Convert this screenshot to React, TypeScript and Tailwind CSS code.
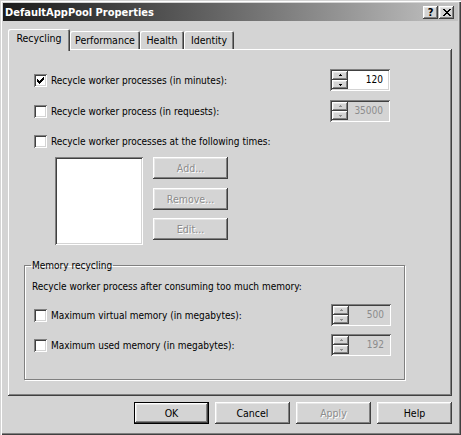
import React from "react";

const RAISED =
  "shadow-[inset_-1px_-1px_#404040,inset_1px_1px_#ffffff,inset_-2px_-2px_#808080,inset_2px_2px_#e6e6e6]";
const SUNKEN =
  "shadow-[inset_1px_1px_#808080,inset_-1px_-1px_#ffffff,inset_2px_2px_#404040,inset_-2px_-2px_#d4d4d4]";

function Check({ checked }: { checked?: boolean }) {
  return (
    <div className={`w-[13px] h-[13px] shrink-0 bg-white ${SUNKEN} flex items-center justify-center`}>
      {checked && (
        <svg width="7" height="7" viewBox="0 0 7 7" shapeRendering="crispEdges">
          <rect x="6" y="0" width="1" height="1" fill="#000" />
          <rect x="5" y="1" width="2" height="1" fill="#000" />
          <rect x="0" y="2" width="1" height="1" fill="#000" />
          <rect x="4" y="2" width="3" height="1" fill="#000" />
          <rect x="0" y="3" width="2" height="1" fill="#000" />
          <rect x="3" y="3" width="3" height="1" fill="#000" />
          <rect x="0" y="4" width="5" height="1" fill="#000" />
          <rect x="1" y="5" width="3" height="1" fill="#000" />
          <rect x="2" y="6" width="1" height="1" fill="#000" />
        </svg>
      )}
    </div>
  );
}

function Arrow({ up, disabled }: { up?: boolean; disabled?: boolean }) {
  const c = disabled ? "#8c8c8c" : "#000";
  return (
    <svg width="5" height="3" viewBox="0 0 5 3" shapeRendering="crispEdges">
      {up ? (
        <>
          <rect x="2" y="0" width="1" height="1" fill={c} />
          <rect x="1" y="1" width="3" height="1" fill={c} />
        </>
      ) : (
        <>
          <rect x="1" y="1" width="3" height="1" fill={c} />
          <rect x="2" y="2" width="1" height="1" fill={c} />
        </>
      )}
    </svg>
  );
}

function Spin({ value, disabled }: { value: string; disabled?: boolean }) {
  return (
    <div
      className={`w-[60px] h-[22px] p-[2px] flex shrink-0 ${SUNKEN} ${
        disabled ? "bg-[#d4d4d4]" : "bg-white"
      }`}
    >
      <div className="flex flex-col w-[16px] h-[18px] shrink-0">
        <div className={`h-[9px] bg-[#d4d4d4] ${RAISED} flex items-center justify-center`}>
          <Arrow up disabled={disabled} />
        </div>
        <div className={`h-[9px] bg-[#d4d4d4] ${RAISED} flex items-center justify-center`}>
          <Arrow disabled={disabled} />
        </div>
      </div>
      <div
        className={`flex-1 text-right pr-[5px] leading-[18px] text-[10px] ${
          disabled ? "text-[#8c8c8c]" : "text-black"
        }`}
      >
        {value}
      </div>
    </div>
  );
}

function Btn({
  children,
  disabled,
  def,
}: {
  children: React.ReactNode;
  disabled?: boolean;
  def?: boolean;
}) {
  if (def) {
    return (
      <div className="w-[75px] h-[22px] border border-black bg-[#d4d4d4]">
        <div
          className={`w-full h-full ${RAISED} flex items-center justify-center leading-[13px] text-black`}
        >
          {children}
        </div>
      </div>
    );
  }
  return (
    <div
      className={`w-[75px] h-[22px] bg-[#d4d4d4] ${RAISED} flex items-center justify-center leading-[13px] ${
        disabled ? "text-[#8c8c8c] [text-shadow:1px_1px_0_#ffffff]" : "text-black"
      }`}
    >
      {children}
    </div>
  );
}

function Row({
  label,
  checked,
  value,
  disabled,
}: {
  label: string;
  checked?: boolean;
  value?: string;
  disabled?: boolean;
}) {
  return (
    <div className="h-[22px] flex items-center justify-between">
      <div className="flex items-center gap-[4px]">
        <Check checked={checked} />
        <span className="leading-[13px]">{label}</span>
      </div>
      {value && <Spin value={value} disabled={disabled} />}
    </div>
  );
}

export default function App() {
  return (
    <div
      className={`w-[461px] h-[435px] bg-[#d4d4d4] p-[3px] flex flex-col text-[10px] text-black font-['DejaVu_Sans_Condensed','DejaVu_Sans',sans-serif] shadow-[inset_1px_1px_#d4d4d4,inset_2px_2px_#ffffff,inset_-1px_-1px_#404040,inset_-2px_-2px_#808080] overflow-hidden`}
    >
      {/* Title bar */}
      <div className="h-[18px] flex items-center justify-between pl-[2px] pr-[4px] bg-gradient-to-r from-[#1c1c1c] via-[#6a6a6a] to-[#c4c4c4]">
        <span className="text-white font-bold text-[11px] leading-[13px]">DefaultAppPool Properties</span>
        <div className="flex gap-[1px]">
          <div
            className={`w-[15px] h-[13px] bg-[#d4d4d4] ${RAISED} flex items-center justify-center font-bold text-[11px] leading-[11px] text-black`}
          >
            ?
          </div>
          <div className={`w-[15px] h-[13px] bg-[#d4d4d4] ${RAISED} flex items-center justify-center`}>
            <svg width="8" height="7" viewBox="0 0 8 7" shapeRendering="crispEdges">
              <path d="M0 0h2v1h-2zM6 0h2v1h-2zM1 1h2v1h-2zM5 1h2v1h-2zM2 2h4v1h-4zM3 3h2v1h-2zM2 4h4v1h-4zM1 5h2v1h-2zM5 5h2v1h-2zM0 6h2v1h-2zM6 6h2v1h-2z" fill="#000" />
            </svg>
          </div>
        </div>
      </div>

      {/* Body */}
      <div className="flex-1 flex flex-col px-[5px] pt-[8px]">
        {/* Tabs */}
        <div className="h-[20px] flex items-end text-[10.5px]">
          <div className="relative z-10 w-[62px] h-[22px] -mb-[2px] bg-[#d4d4d4] rounded-t-[2px] shadow-[inset_1px_1px_#ffffff,inset_-1px_0_#404040,inset_-2px_0_#808080] flex justify-center pt-[3px] leading-[13px]">
            Recycling
          </div>
          <div className="w-[70px] h-[18px] bg-[#d4d4d4] rounded-t-[2px] shadow-[inset_1px_1px_#ffffff,inset_-1px_0_#404040,inset_-2px_0_#808080] flex justify-center pt-[3px] leading-[13px]">
            Performance
          </div>
          <div className="w-[44px] h-[18px] bg-[#d4d4d4] rounded-t-[2px] shadow-[inset_1px_1px_#ffffff,inset_-1px_0_#404040,inset_-2px_0_#808080] flex justify-center pt-[3px] leading-[13px]">
            Health
          </div>
          <div className="w-[50px] h-[18px] bg-[#d4d4d4] rounded-t-[2px] shadow-[inset_1px_1px_#ffffff,inset_-1px_0_#404040,inset_-2px_0_#808080] flex justify-center pt-[3px] leading-[13px]">
            Identity
          </div>
        </div>

        {/* Panel */}
        <div className="w-[444px] h-[347px] shadow-[inset_-1px_-1px_#404040,inset_1px_1px_#ffffff,inset_-2px_-2px_#808080] flex flex-col pl-[16px] pt-[20px]">
          <div className="ml-[10px] w-[356px] flex flex-col">
            <Row label="Recycle worker processes (in minutes):" checked value="120" />
            <div className="mt-[9px]">
              <Row label="Recycle worker process (in requests):" value="35000" disabled />
            </div>
            <div className="mt-[8px]">
              <Row label="Recycle worker processes at the following times:" />
            </div>
            <div className="mt-[5px] ml-[21px] flex">
              <div className={`w-[88px] h-[88px] bg-white ${SUNKEN}`} />
              <div className="ml-[10px] flex flex-col text-[10.5px]">
                <Btn disabled>Add...</Btn>
                <div className="mt-[9px]">
                  <Btn disabled>Remove...</Btn>
                </div>
                <div className="mt-[8px]">
                  <Btn disabled>Edit...</Btn>
                </div>
              </div>
            </div>
          </div>

          <fieldset className="mt-[14px] w-[381px] border border-[#808080] shadow-[inset_1px_1px_#ffffff,1px_1px_#ffffff] pl-[9px] pr-[13px] pb-[23px]">
            <legend className="ml-[-3px] px-[1px] leading-[13px]">Memory recycling</legend>
            <div className="mt-[8px] -ml-[2px] leading-[13px]">
              Recycle worker process after consuming too much memory:
            </div>
            <div className="mt-[11px]">
              <Row label="Maximum virtual memory (in megabytes):" value="500" disabled />
            </div>
            <div className="mt-[8px]">
              <Row label="Maximum used memory (in megabytes):" value="192" disabled />
            </div>
          </fieldset>
        </div>

        {/* Buttons */}
        <div className="mt-[6px] pr-[1px] flex justify-end gap-[6px] text-[10.5px]">
          <Btn def>OK</Btn>
          <Btn>Cancel</Btn>
          <Btn disabled>Apply</Btn>
          <Btn>Help</Btn>
        </div>
      </div>
    </div>
  );
}
